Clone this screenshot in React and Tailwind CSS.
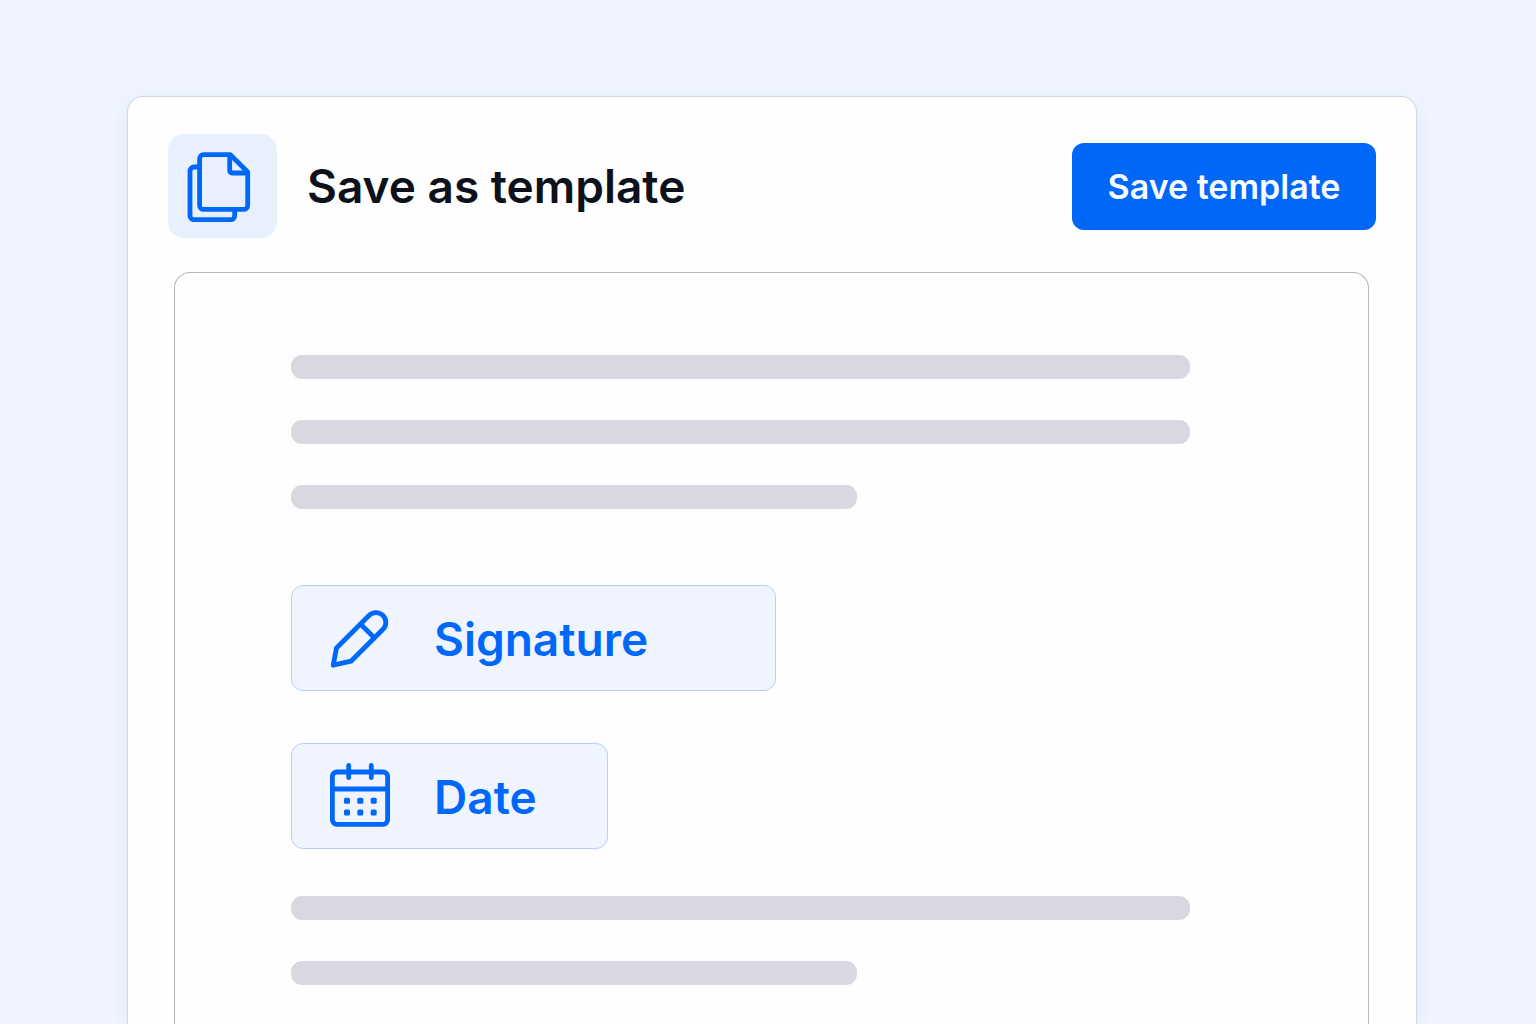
import React from 'react';

const FilesIcon = () => (
    <svg
        className="h-[72px] w-16"
        viewBox="0 -1 64 72"
        fill="none"
        stroke="currentColor"
        strokeWidth="4.8"
        strokeLinejoin="round"
        aria-hidden="true"
    >
        <path d="M12.6 16H7a4 4 0 0 0-4 4V64.7a4 4 0 0 0 4 4H43.7a4 4 0 0 0 4-4V58.4" />
        <path d="M43.3 3.7H16.6a4 4 0 0 0-4 4V54.4a4 4 0 0 0 4 4H56.7a4 4 0 0 0 4-4V21Z" />
        <path d="M42.7 3.7V19.7a2.3 2.3 0 0 0 2.3 2.3H60.7" />
    </svg>
);

const PencilIcon = () => (
    <svg
        className="size-[60px]"
        viewBox="0 -1 60 60"
        fill="none"
        stroke="currentColor"
        strokeWidth="4.8"
        strokeLinejoin="round"
        aria-hidden="true"
    >
        <path d="M39 6.5A9.7 9.7 0 0 1 53 20.3L21 52.2L3.2 56.2L6.5 39Z" />
        <path d="M30.5 15L44.5 29" />
    </svg>
);

const CalendarIcon = () => (
    <svg className="h-[66px] w-[60px]" viewBox="0 1 60 66" fill="none" stroke="currentColor" strokeWidth="4.8" aria-hidden="true">
        <rect x="2.4" y="10" width="55.2" height="52.3" rx="4.5" />
        <path d="M2.4 27H57.6" />
        <path d="M18.7 3.4V15.7M41.3 3.4V15.7" strokeLinecap="round" />
        <g fill="currentColor" stroke="none">
            <rect x="14" y="35.7" width="6" height="6" rx="1.5" />
            <rect x="27.3" y="35.7" width="6" height="6" rx="1.5" />
            <rect x="40.7" y="35.7" width="6" height="6" rx="1.5" />
            <rect x="14" y="47.5" width="6" height="6" rx="1.5" />
            <rect x="27.3" y="47.5" width="6" height="6" rx="1.5" />
            <rect x="40.7" y="47.5" width="6" height="6" rx="1.5" />
        </g>
    </svg>
);

const TextLine = ({ short }) => (
    <div className={`h-6 rounded-[11px] bg-[#d8d9e0] ${short ? 'w-[63%]' : 'w-full'}`} />
);

const Field = ({ icon, label, width }) => (
    <button
        type="button"
        className={`flex h-[106px] items-center gap-11 rounded-xl border border-[#b5d0fb] bg-[#eff4ff] pl-[38px] text-[46px] leading-[48px] font-semibold text-[#0068f8] ${width}`}
    >
        {icon}
        <span className="pt-0.5">{label}</span>
    </button>
);

const App = () => {
    return (
        <div className="flex min-h-screen flex-col bg-[#eff4ff] pt-24 pr-[119px] pl-[127px] font-['Inter',sans-serif]">
            <main className="flex flex-1 flex-col rounded-t-2xl border border-b-0 border-[#d3d7e1] bg-[#fefefe] shadow-[0_4px_16px_rgba(60,90,160,0.08)]">
                <header className="flex items-center justify-between px-10 pt-[37px]">
                    <div className="flex items-center gap-[30px]">
                        <div className="flex h-[104px] w-[109px] items-center rounded-2xl bg-[#e8f0fe] pl-[19px] text-[#0068f8]">
                            <FilesIcon />
                        </div>
                        <h1 className="text-[46px] leading-[48px] font-semibold text-[#0c111b]">Save as template</h1>
                    </div>
                    <button
                        type="button"
                        className="h-[87px] w-[304px] rounded-xl bg-[#0067f8] pt-0.5 text-[34px] leading-10 font-semibold text-[#f8fbff]"
                    >
                        Save template
                    </button>
                </header>

                {/* Document preview */}
                <section className="mt-[34px] mr-[47px] ml-[46px] flex-1 rounded-t-2xl border border-b-0 border-[#b3b6bf] pt-[82px] pr-[178px] pb-[38px] pl-[116px]">
                    <div className="flex flex-col gap-[41px]">
                        <TextLine />
                        <TextLine />
                        <TextLine short />
                    </div>
                    <div className="mt-[76px] mb-[47px] flex flex-col gap-[52px]">
                        <Field icon={<PencilIcon />} label="Signature" width="w-[485px]" />
                        <Field icon={<CalendarIcon />} label="Date" width="w-[317px]" />
                    </div>
                    <div className="flex flex-col gap-[41px]">
                        <TextLine />
                        <TextLine short />
                    </div>
                </section>
            </main>
        </div>
    );
};

export default App;
